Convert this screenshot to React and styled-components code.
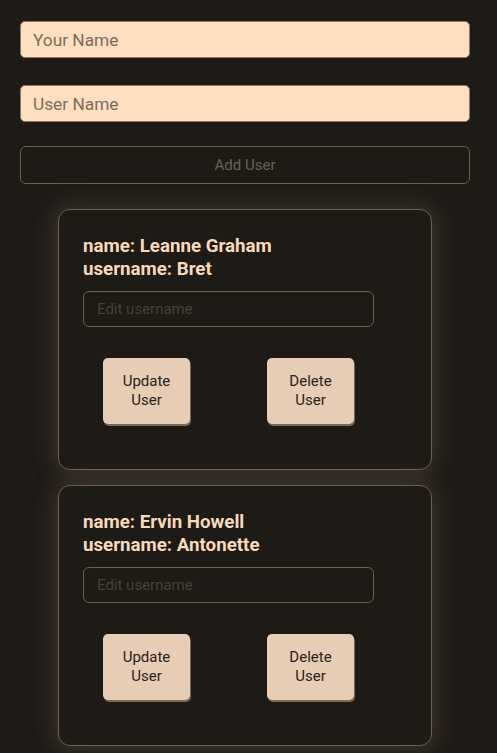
import React from "react";
import styled, { createGlobalStyle } from "styled-components";

const Global = createGlobalStyle`
  html, body { margin: 0; padding: 0; background: #1e1a16; }
  body { font-family: Roboto, "Noto Sans", sans-serif; }
  * { box-sizing: border-box; }
`;

const Page = styled.div`
  width: 497px;
  min-height: 753px;
  background: #1e1a16;
  padding: 21px 27px 20px 20px;
  display: flex;
  flex-direction: column;
`;

const TopInput = styled.input`
  width: 450px;
  height: 37px;
  background: #ffdfc0;
  border: 1px solid #8b7864;
  border-radius: 5px;
  padding: 0 12px;
  font-family: Roboto, sans-serif;
  font-size: 17.3px;
  color: #3a2f26;
  margin-bottom: ${(p) => p.$mb}px;
  outline: none;
  &::placeholder { color: #7a6c5f; }
`;

const AddButton = styled.button`
  width: 450px;
  height: 38px;
  background: transparent;
  border: 1px solid #6b5f52;
  border-radius: 6px;
  font-family: Roboto, sans-serif;
  font-size: 15px;
  color: #6e6154;
  margin-bottom: 25px;
`;

const CardList = styled.div`
  display: flex;
  flex-direction: column;
  align-items: center;
  gap: 15px;
`;

const Card = styled.div`
  width: 374px;
  height: 261px;
  border: 1px solid #6b5f52;
  border-radius: 12px;
  background: #1e1a16;
  box-shadow: 0 0 22px 4px rgba(120, 104, 86, 0.35);
  padding: 25px 24px 0 24px;
  display: flex;
  flex-direction: column;
`;

const Info = styled.div`
  font-weight: 700;
  font-size: 18.72px;
  line-height: 23px;
  color: #f7d9bc;
`;

const EditInput = styled.input`
  margin-top: 10px;
  width: 291px;
  height: 36px;
  background: transparent;
  border: 1px solid #6b5f52;
  border-radius: 6px;
  padding: 0 13px;
  font-family: Roboto, sans-serif;
  font-size: 15px;
  color: #d8c0a8;
  outline: none;
  &::placeholder { color: #4a4038; }
`;

const Actions = styled.div`
  display: flex;
  gap: 77px;
  margin-top: 31px;
  padding-left: 20px;
`;

const ActionButton = styled.button`
  width: 87px;
  height: 66px;
  background: #e8cdb6;
  border: none;
  border-radius: 5px;
  box-shadow: 1px 2px 0 #7a6856;
  font-family: Roboto, sans-serif;
  font-size: 15px;
  line-height: 19px;
  color: #2a221c;
  padding: 0 14px;
`;

const users = [
  { name: "Leanne Graham", username: "Bret" },
  { name: "Ervin Howell", username: "Antonette" },
];

export default function App() {
  return (
    <>
      <Global />
      <Page>
        <TopInput placeholder="Your Name" $mb={27} />
        <TopInput placeholder="User Name" $mb={24} />
        <AddButton>Add User</AddButton>
        <CardList>
          {users.map((u) => (
            <Card key={u.username}>
              <Info>
                <div>name: {u.name}</div>
                <div>username: {u.username}</div>
              </Info>
              <EditInput placeholder="Edit username" />
              <Actions>
                <ActionButton>Update User</ActionButton>
                <ActionButton>Delete User</ActionButton>
              </Actions>
            </Card>
          ))}
        </CardList>
      </Page>
    </>
  );
}
